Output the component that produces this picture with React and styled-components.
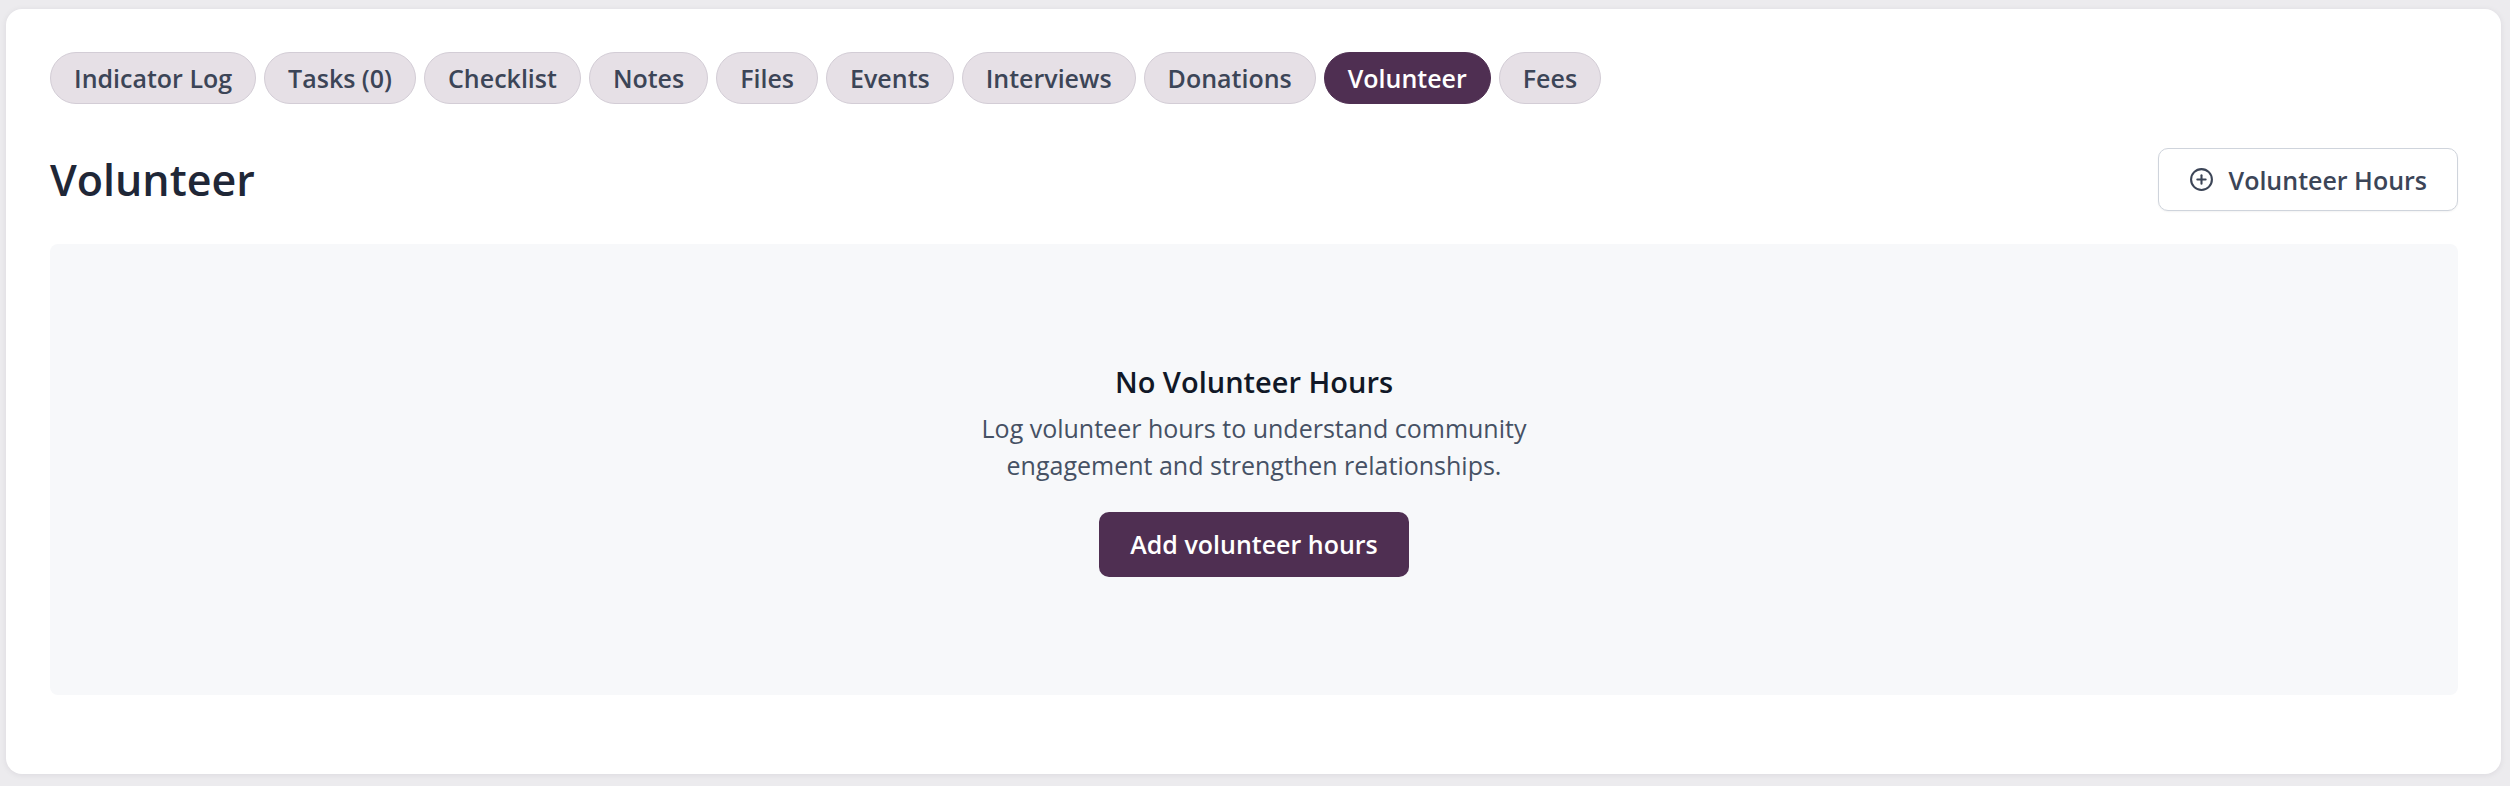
import React from 'react'
import styled, { createGlobalStyle } from 'styled-components'
import { CirclePlus } from 'lucide-react'

const GlobalStyle = createGlobalStyle`
  * { box-sizing: border-box; }
  body {
    margin: 0;
    background: #ecebee;
    font-family: "Open Sans", "Noto Sans", sans-serif;
  }
`

const Page = styled.div`
  padding: 9px 9px 12px 6px;
`

const Card = styled.div`
  background: #ffffff;
  border-radius: 16px;
  box-shadow: 0 1px 6px rgba(40, 30, 50, 0.08);
  padding: 43px 43px 79px 44px;
`

const TabBar = styled.div`
  display: flex;
  gap: 8px;
`

const Tab = styled.button`
  height: 52px;
  padding: 0 23px;
  border-radius: 26px;
  border: 1px solid ${p => (p.$active ? '#4f2f52' : '#d3cdd6')};
  background: ${p => (p.$active ? '#4f2f52' : '#e6e0e6')};
  color: ${p => (p.$active ? '#ffffff' : '#3c4557')};
  font-family: inherit;
  font-size: 25px;
  font-weight: 600;
  cursor: pointer;
`

const Header = styled.div`
  display: flex;
  justify-content: space-between;
  align-items: center;
  margin-top: 44px;
`

const Title = styled.h1`
  margin: 0;
  font-size: 43px;
  font-weight: 600;
  color: #1f2737;
`

const OutlineButton = styled.button`
  display: flex;
  align-items: center;
  gap: 15px;
  height: 63px;
  padding: 0 30px;
  border: 1px solid #cfd4dc;
  border-radius: 10px;
  background: #ffffff;
  box-shadow: 0 1px 2px rgba(0, 0, 0, 0.05);
  color: #3c4557;
  font-family: inherit;
  font-size: 25px;
  font-weight: 600;
  cursor: pointer;
`

const Empty = styled.div`
  margin-top: 33px;
  height: 451px;
  background: #f7f8fa;
  border-radius: 8px;
  display: flex;
  flex-direction: column;
  align-items: center;
  justify-content: center;
  text-align: center;
`

const EmptyTitle = styled.h3`
  margin: 0;
  font-size: 29px;
  line-height: 38px;
  font-weight: 600;
  color: #111827;
`

const EmptyText = styled.p`
  margin: 9px 0 0;
  max-width: 600px;
  font-size: 25px;
  line-height: 37px;
  color: #465164;
`

const PrimaryButton = styled.button`
  margin-top: 28px;
  height: 65px;
  padding: 0 31px;
  border: none;
  border-radius: 10px;
  background: #4f2f52;
  color: #ffffff;
  font-family: inherit;
  font-size: 25px;
  font-weight: 600;
  cursor: pointer;
`

const tabs = ['Indicator Log', 'Tasks (0)', 'Checklist', 'Notes', 'Files', 'Events', 'Interviews', 'Donations', 'Volunteer', 'Fees']

export default function App() {
  return (
    <Page>
      <GlobalStyle />
      <Card>
        <TabBar>
          {tabs.map(t => (
            <Tab key={t} $active={t === 'Volunteer'}>{t}</Tab>
          ))}
        </TabBar>

        <Header>
          <Title>Volunteer</Title>
          <OutlineButton>
            <CirclePlus size={25} strokeWidth={2} />
            Volunteer Hours
          </OutlineButton>
        </Header>

        <Empty>
          <EmptyTitle>No Volunteer Hours</EmptyTitle>
          <EmptyText>
            Log volunteer hours to understand community engagement and strengthen relationships.
          </EmptyText>
          <PrimaryButton>Add volunteer hours</PrimaryButton>
        </Empty>
      </Card>
    </Page>
  )
}
